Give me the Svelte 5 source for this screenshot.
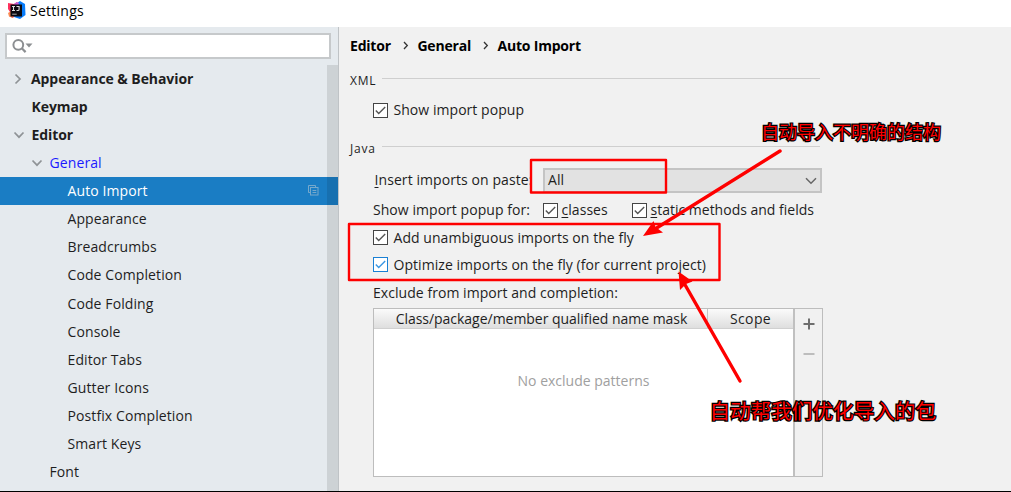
<script>
  const tree = [
    { label: 'Appearance & Behavior', level: 0, arrow: 'right', x: 31 },
    { label: 'Keymap', level: 0, x: 31.5 },
    { label: 'Editor', level: 0, arrow: 'down', x: 31.5 },
    { label: 'General', level: 1, arrow: 'down', x: 49.5, changed: true },
    { label: 'Auto Import', level: 2, x: 67.5, selected: true },
    { label: 'Appearance', level: 2, x: 67.5 },
    { label: 'Breadcrumbs', level: 2, x: 67.5 },
    { label: 'Code Completion', level: 2, x: 67.5 },
    { label: 'Code Folding', level: 2, x: 67.5 },
    { label: 'Console', level: 2, x: 67.5 },
    { label: 'Editor Tabs', level: 2, x: 67.5 },
    { label: 'Gutter Icons', level: 2, x: 67.5 },
    { label: 'Postfix Completion', level: 2, x: 67.5 },
    { label: 'Smart Keys', level: 2, x: 67.5 },
    { label: 'Font', level: 1, x: 49.5 },
  ];

  let showXml = $state(true);
  let showClasses = $state(true);
  let showStatic = $state(true);
  let addImports = $state(true);
  let optimizeImports = $state(true);
</script>

{#snippet box(checked, focused)}
  <svg class="box" class:focused width="15" height="15" viewBox="0 0 15 15">
    <rect x=".5" y=".5" width="14" height="14" fill="#fff" stroke="currentColor" />
    {#if checked}
      <path class="tick" d="M2.8 7.6 L5.7 10.5 L12.2 4" fill="none" stroke-width="1.4" />
    {/if}
  </svg>
{/snippet}

<div class="window">
  <header>
    <svg width="18" height="19" viewBox="0 0 18 19">
      <path d="M0 2 L6 3 L9 1 L10 9 L5 17 L1 15 L2 11 L0 8Z" fill="#fe315d" />
      <path d="M0 12 L5 9 L5 17 L1 15.5Z" fill="#f98a52" />
      <path d="M9 2 L12 0 L17 3 L17.5 14 L12 18 L6 16Z" fill="#087cfa" />
      <path d="M6 3 L9 1 L11 2 L10 5 L6 5Z" fill="#c95ad0" />
      <rect x="2.5" y="3.5" width="11.5" height="12" fill="#0b0a10" />
      <path d="M4 5.5h3M5.5 5.5v4M4 9.5h3M8.5 5.5h2.6v3q0 1-1.2 1H8.5" stroke="#ddd" stroke-width="1.1" fill="none" />
      <path d="M4.2 13.2h4.5" stroke="#aaa" stroke-width="1" />
    </svg>
    <span>Settings</span>
  </header>

  <div class="body">
    <aside>
      <div class="search">
        <svg width="22" height="16" viewBox="0 0 22 16">
          <circle cx="6.3" cy="6.8" r="4.9" fill="none" stroke="#8c8f92" stroke-width="2" />
          <path d="M9.8 10.3 L13.6 14.1" stroke="#8c8f92" stroke-width="2.2" />
          <path d="M13.5 5.5h7l-3.5 4z" fill="#8c8f92" />
        </svg>
      </div>
      <ul>
        {#each tree as item}
          <li class:top={item.level === 0} class:selected={item.selected} class:changed={item.changed} style="padding-left: {item.x}px">
            {#if item.arrow}
              <svg class="arrow" width="12" height="12" viewBox="0 0 12 12">
                <path d={item.arrow === 'down' ? 'M1.5 3.5 L6 8.2 L10.5 3.5' : 'M3.5 1.5 L8 6 L3.5 10.5'} />
              </svg>
            {/if}
            <span>{item.label}</span>
            {#if item.selected}
              <svg class="copy" width="11" height="11" viewBox="0 0 11 11">
                <path d="M2.5 7.5h-2v-7h7v2" />
                <rect x="2.5" y="2.5" width="7.5" height="7.5" />
                <path d="M4.5 5.5h3.8M4.5 7.5h3.8" />
              </svg>
            {/if}
          </li>
        {/each}
      </ul>
      <div class="scrollbar"></div>
    </aside>

    <main>
      <nav>
        <b>Editor</b>
        <svg width="6" height="9" viewBox="0 0 6 9"><path d="M1 1 L4.3 4.5 L1 8" /></svg>
        <b>General</b>
        <svg width="6" height="9" viewBox="0 0 6 9"><path d="M1 1 L4.3 4.5 L1 8" /></svg>
        <b>Auto Import</b>
      </nav>

      <div class="group xml"><span>XML</span><hr /></div>
      <div class="row first">
        <button onclick={() => (showXml = !showXml)}>{@render box(showXml)}<span>Show import popup</span></button>
      </div>

      <div class="group java"><span>Java</span><hr /></div>
      <div class="row paste">
        <span class="label insert"><u>I</u>nsert imports on paste:</span>
        <div class="select">
          <span>All</span>
          <svg width="12" height="8" viewBox="0 0 12 8"><path d="M1 1.2 L6 6.2 L11 1.2" fill="none" stroke="#666" stroke-width="1.5" /></svg>
        </div>
      </div>
      <div class="row kinds">
        <span class="label">Show import popup for:</span>
        <button class="classes" onclick={() => (showClasses = !showClasses)}>{@render box(showClasses)}<span><u>c</u>lasses</span></button>
        <button onclick={() => (showStatic = !showStatic)}>{@render box(showStatic)}<span class="static"><u>s</u>tatic methods and fields</span></button>
      </div>
      <div class="row">
        <button onclick={() => (addImports = !addImports)}>{@render box(addImports)}<span>Add unambiguous imports on the fly</span></button>
      </div>
      <div class="row">
        <button onclick={() => (optimizeImports = !optimizeImports)}>{@render box(optimizeImports, true)}<span>Optimize imports on the fly (for current project)</span></button>
      </div>
      <div class="row exclude"><span>Exclude from import and completion:</span></div>

      <div class="table">
        <div class="grid">
          <div class="thead">
            <div class="mask"><span>Class/package/member qualified name mask</span></div>
            <div class="scope"><span>Scope</span></div>
          </div>
          <div class="empty"><span>No exclude patterns</span></div>
        </div>
        <div class="tools">
          <svg width="12" height="12" viewBox="0 0 12 12"><path d="M6 .5v11M.5 6h11" stroke="#6e6e6e" stroke-width="2" /></svg>
          <svg width="12" height="12" viewBox="0 0 12 12"><path d="M.5 6h11" stroke="#bdbdbd" stroke-width="2" /></svg>
        </div>
      </div>
    </main>
  </div>

  <!-- notes drawn over the dialog -->
  <svg class="marks" width="1011" height="492" viewBox="0 0 1011 492">
    <g fill="none" stroke="#fe0000" stroke-width="2.4" stroke-linejoin="round">
      <rect x="531" y="160" width="135" height="32.5" />
      <rect x="349" y="224" width="370.5" height="56" />
    </g>
    <g stroke="#fe0000" stroke-width="3.4" stroke-linecap="round">
      <path d="M780 151 L655 229" />
      <path d="M740 381 L684 283" />
    </g>
    <path d="M643 236 L653.5 221 L655.5 227 L663 232.5Z" fill="#fe0000" />
    <path d="M678.5 271.5 L692.5 281.5 L686 284 L680 290Z" fill="#fe0000" />
  </svg>
  <p class="note top-note">自动导入不明确的结构</p>
  <p class="note bottom-note">自动帮我们优化导入的包</p>
</div>

<style>
  :global(body) { margin: 0; }
  .window {
    position: relative;
    display: flex;
    flex-direction: column;
    width: 1011px;
    height: 492px;
    box-sizing: border-box;
    border-bottom: 1px solid #000;
    overflow: hidden;
    background: #f1f1f1;
    color: #1e1e1e;
    font: 14px/20px "Open Sans", "Noto Sans", sans-serif;
    white-space: nowrap;
  }
  header { display: flex; align-items: center; height: 27px; padding: 0 0 0 8px; background: #fff; box-sizing: border-box; }
  header svg { margin-top: -6px; }
  header span { margin: -6px 0 0 4px; color: #000; letter-spacing: .25px; }
  .body { display: flex; flex: 1; min-height: 0; }

  aside { position: relative; width: 339px; box-sizing: border-box; border-right: 1px solid #bfc3c6; background: #e5eaee; overflow: hidden; }
  .search { display: flex; align-items: center; width: 326px; height: 26px; margin: 6px 0 0 5px; padding-left: 5px; box-sizing: border-box; border: 2px solid #c6c9cb; background: #fff; }
  ul { margin: 5.5px 0 0; padding: 0; list-style: none; }
  li { display: flex; align-items: center; height: 28.1px; padding-top: .5px; box-sizing: border-box; letter-spacing: .1px; }
  .top { font-weight: 700; letter-spacing: -.08px; }
  .changed { color: #1a1aff; }
  .selected { background: #1a7dc4; color: #fff; }
  .arrow { margin: 0 7px 0 -19px; fill: none; stroke: #8f9396; stroke-width: 1.7; }
  .copy { margin: -2px 19px 0 auto; fill: none; stroke: #76a9cc; stroke-width: 1; }
  .scrollbar { position: absolute; top: 38px; right: 0; bottom: 0; width: 11px; background: rgba(0, 0, 0, .1); }

  main { flex: 1; padding-left: 11px; }
  nav { display: flex; align-items: center; height: 20px; margin-top: 8.5px; color: #000; letter-spacing: -.2px; }
  nav svg { margin: 0 8.5px 0 12px; fill: none; stroke: #333; stroke-width: 1.3; }
  .group { display: flex; align-items: center; width: 470px; height: 20px; font-size: 12px; letter-spacing: .8px; }
  .group hr { flex: 1; height: 1px; margin: 0 0 5px 6px; border: 0; background: #cfcfcf; }
  .xml { margin-top: 15.5px; }
  .java { margin-top: 15.5px; }
  .row { display: flex; align-items: center; height: 27px; padding-left: 23px; letter-spacing: .05px; }
  .first { margin-top: 5.5px; }
  .paste { height: 25px; margin-top: 9px; }
  .paste span { position: relative; top: -.5px; }
  .kinds { height: 34px; margin-bottom: -3px; }
  .exclude { height: 30px; }
  .label { width: 170px; }
  .insert { width: 168.5px; padding-left: 1.5px; letter-spacing: .08px; }
  button { display: flex; align-items: center; gap: 5.5px; padding: 0; border: 0; background: none; color: inherit; font: inherit; letter-spacing: inherit; }
  .classes { width: 89px; }
  .classes span, .static { margin-left: -2px; }
  .static { letter-spacing: 0; }
  .box { flex: none; color: #444; }
  .box.focused { color: #1a80d4; }
  .tick { stroke: #555; }
  .focused .tick { stroke: #3b97e3; }
  u { text-underline-offset: 2px; }
  .select { display: flex; align-items: center; justify-content: space-between; width: 279px; height: 25px; padding: 0 3px; box-sizing: border-box; border: 2px solid #c4c4c4; background: #e2e2e2; }

  .table { display: flex; width: 450px; height: 169px; margin-left: 23px; box-sizing: border-box; border: 1px solid #bdbdbd; }
  .grid { flex: 1; background: #fff; border-right: 2px solid #c0c0c0; }
  .thead { display: flex; height: 20px; box-sizing: border-box; background: linear-gradient(#fbfbfb, #dedede); border-bottom: 1px solid #d0d0d0; text-align: center; line-height: 20px; }
  .mask { width: 334px; padding-left: 2px; box-sizing: border-box; letter-spacing: -.03px; border-right: 1px solid #c4c4c4; }
  .scope { flex: 1; letter-spacing: .4px; }
  .empty { padding-top: 42px; color: #a0a0a0; text-align: center; }
  .tools { display: flex; flex-direction: column; gap: 18px; align-items: center; width: 27px; padding-top: 9px; }

  .marks { position: absolute; inset: 0; pointer-events: none; }
  .note {
    position: absolute;
    margin: 0;
    color: #fe0000;
    font-family: "Noto Sans CJK SC", sans-serif;
    font-weight: 400;
    -webkit-text-stroke: 2.4px #000;
    paint-order: stroke fill;
  }
  .top-note { left: 761px; top: 121px; font-size: 18px; }
  .bottom-note { left: 709.5px; top: 400px; font-size: 20.6px; }
</style>
